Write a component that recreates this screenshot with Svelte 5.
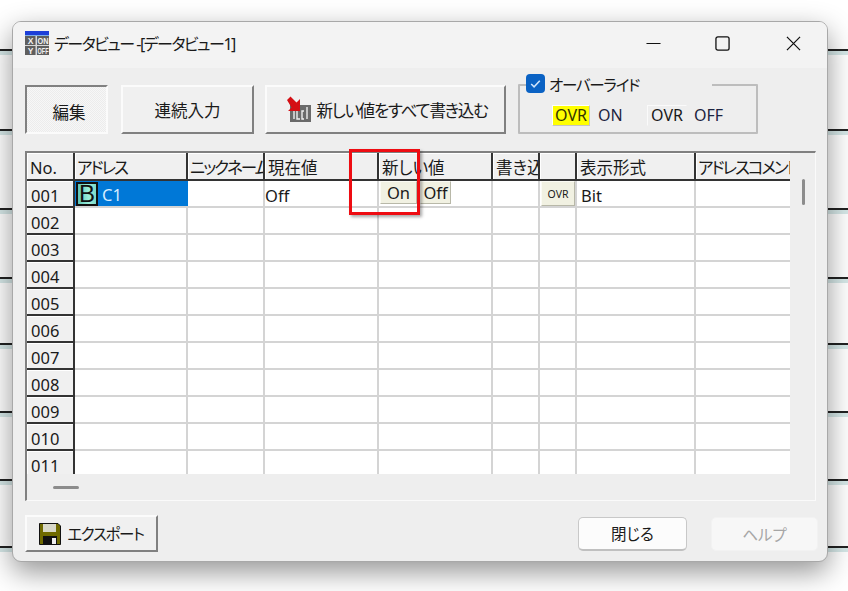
<script>
	const lineRows = [49, 129, 208, 277, 343, 411, 479, 546];
	const columns = ["No.", "アドレス", "ニックネーム", "現在値", "新しい値", "書き込", "", "表示形式", "アドレスコメント"];
	const kanaColumns = [1, 2, 8];
	const rows = ["001", "002", "003", "004", "005", "006", "007", "008", "009", "010", "011"];
</script>

<div class="desktop">
	{#each lineRows as y}
		<div class="bg-line" style="top: {y}px"></div>
	{/each}

	<div class="window">
		<div class="titlebar">
			<svg class="app-icon" viewBox="0 0 24 24">
				<rect width="24" height="24" fill="#5f5f5f" />
				<rect width="24" height="4" fill="#1d3fd8" />
				<rect x="0" y="4" width="24" height="1" fill="#7fb0e8" />
				<rect x="10.500" y="5" width="1.500" height="19" fill="#d8d8d8" />
				<rect x="0" y="14" width="24" height="1" fill="#d8d8d8" />
				<text x="5.500" y="13" class="tiny" text-anchor="middle">X</text>
				<text x="5.500" y="23" class="tiny" text-anchor="middle">Y</text>
				<text x="18" y="13" class="tiny" text-anchor="middle" textLength="11" lengthAdjust="spacingAndGlyphs">ON</text>
				<text x="18" y="23" class="tiny" text-anchor="middle" textLength="11" lengthAdjust="spacingAndGlyphs">OFF</text>
			</svg>
			<span class="title">データビュー -[データビュー1]</span>
			<div class="controls">
				<svg viewBox="0 0 16 16"><path d="M0.500 8h15" stroke="#111" fill="none" stroke-width="1.200" /></svg>
				<svg viewBox="0 0 16 16"><rect x="1" y="1" width="14" height="14" rx="2" stroke="#111" fill="none" stroke-width="1.400" /></svg>
				<svg viewBox="0 0 16 16"><path d="M1 1l14 14M15 1L1 15" stroke="#111" fill="none" stroke-width="1.300" /></svg>
			</div>
		</div>

		<div class="toolbar">
			<button class="raised pressed edit" type="button">編集</button>
			<button class="raised serial" type="button">連続入力</button>
			<button class="raised write" type="button">
				<svg class="write-icon" viewBox="0 0 26 28">
					<rect x="4" y="9" width="21" height="17" fill="#6a6a6a" />
					<path d="M8 15v8M11 15v8h3M18 15h-2v8h2M21 11v12" stroke="#eee" stroke-width="1.400" fill="none" />
					<path d="M1 4l3.500-3.500 6 6 3.500-3.500v12H2l3.500-3.500z" fill="#d40f14" />
				</svg>
				<span class="write-label">新しい値をすべて書き込む</span>
			</button>
			<div class="group">
				<div class="legend">
					<span class="check">
						<svg viewBox="0 0 20 20"><path d="M5.500 10.500l3 3 6-6.500" stroke="#cfe4fb" stroke-width="1.600" fill="none" /></svg>
					</span>
					<span class="legend-label">オーバーライド</span>
				</div>
				<div class="ovr-row">
					<span class="ovr on">OVR</span>
					<span class="ovr-label">ON</span>
					<span class="ovr off">OVR</span>
					<span class="ovr-label">OFF</span>
				</div>
			</div>
		</div>

		<div class="frame">
			<div class="sheet">
				{#each columns as col, i}
					<div class="head" class:kana={kanaColumns.includes(i)}>{col}</div>
				{/each}

				{#each rows as row, r}
					<div class="row-head">{row}</div>
					{#if r === 0}
						<div class="cell selected">
							<span class="type-b">B</span>
							<span>C1</span>
						</div>
						<div class="cell"></div>
						<div class="cell">Off</div>
						<div class="cell value-cell">
							<span class="mini on-btn">On</span>
							<span class="mini off-btn">Off</span>
						</div>
						<div class="cell"></div>
						<div class="cell ovr-cell"><span class="mini ovr-btn">OVR</span></div>
						<div class="cell format-cell">Bit</div>
						<div class="cell last"></div>
					{:else}
						{#each columns.slice(1) as _, c}
							<div class="cell" class:last={c === columns.length - 2}></div>
						{/each}
					{/if}
				{/each}
			</div>
			<div class="vscroll"><span class="vthumb"></span></div>
			<div class="hscroll"><span class="hthumb"></span></div>
			<div class="corner"></div>
		</div>

		<div class="footer">
			<button class="raised export" type="button">
				<svg class="disk" viewBox="0 0 22 22">
					<path d="M0.500 0.500h18.500l2.500 2.500v18.500H0.500z" fill="#6f6a00" stroke="#111" />
					<rect x="4" y="1" width="13" height="8" fill="#d8d8c8" />
					<rect x="4" y="13" width="14" height="8" fill="#111" />
					<rect x="13" y="15" width="4" height="6" fill="#eee" />
				</svg>
				<span class="export-label">エクスポート</span>
			</button>
			<div class="spacer"></div>
			<button class="win-btn close" type="button">閉じる</button>
			<button class="win-btn help" type="button" disabled>ヘルプ</button>
		</div>
	</div>

	<div class="callout"></div>
</div>

<style>
	:global(body) {
		margin: 0;
		background: #fff;
	}

	.desktop {
		position: relative;
		width: 848px;
		height: 591px;
		overflow: hidden;
		background: #fff;
		font-family: "Noto Sans", "Noto Sans CJK JP", sans-serif;
		font-feature-settings: "palt";
		color: #1a1a1a;
	}

	.bg-line {
		position: absolute;
		left: 0;
		right: 0;
		height: 2px;
		background: #222;
		border-bottom: 4px solid #d6e8e8;
	}

	.window {
		position: absolute;
		left: 12px;
		top: 21px;
		width: 816px;
		height: 541px;
		box-sizing: border-box;
		display: flex;
		flex-direction: column;
		background: #eeeeee;
		border: 1px solid #a8a8a8;
		border-radius: 9px;
		box-shadow: 0 10px 28px rgba(0, 0, 0, 0.42);
		overflow: hidden;
	}

	.titlebar {
		box-sizing: border-box;
		height: 46px;
		flex-shrink: 0;
		display: flex;
		align-items: center;
		padding: 0 0 4px 12px;
		background: #f3f3f3;
	}

	.app-icon {
		width: 24px;
		height: 24px;
		margin-right: 5px;
	}

	.tiny {
		font-family: "Liberation Sans", sans-serif;
		font-size: 8.500px;
		font-weight: 700;
		fill: #f2f2f2;
	}

	.title {
		font-size: 16px;
		letter-spacing: -1.500px;
		white-space: nowrap;
	}

	.controls {
		margin-left: auto;
		display: flex;
		gap: 55px;
		padding-right: 26px;
	}

	.controls svg {
		width: 15px;
		height: 15px;
	}

	.controls svg:nth-child(2) {
		margin: 0 1px 0 -1px;
	}

	.toolbar {
		display: flex;
		align-items: flex-start;
		padding: 17px 0 0 12px;
		height: 49px;
		flex-shrink: 0;
	}

	.raised {
		box-sizing: border-box;
		height: 49px;
		padding: 0;
		font: inherit;
		font-feature-settings: "palt";
		font-size: 16.500px;
		color: #1a1a1a;
		background: #f0f0f0;
		border: 2px solid;
		border-color: #fbfbfb #808080 #808080 #fbfbfb;
		display: flex;
		align-items: center;
		justify-content: center;
	}

	.pressed {
		border-color: #808080 #fbfbfb #fbfbfb #808080;
		background: repeating-conic-gradient(#f7f7f7 0 25%, #ececec 0 50%) 0 0 / 2px 2px;
	}

	.edit {
		width: 83px;
		margin-right: 13px;
		padding: 4px 0 0 5px;
	}

	.serial {
		width: 133px;
		margin-right: 11px;
	}

	.write {
		width: 241px;
		margin-right: 12px;
		padding-left: 2px;
		gap: 5px;
		white-space: nowrap;
	}

	.write-label {
		letter-spacing: -1.250px;
	}

	.write-icon {
		width: 26px;
		height: 28px;
	}

	.group {
		position: relative;
		box-sizing: border-box;
		width: 240px;
		height: 50px;
		margin-top: -1px;
		border: 2px solid #bdbdbd;
		border-radius: 1px;
	}

	.legend {
		position: absolute;
		left: 6px;
		top: -13px;
		width: 186px;
		height: 22px;
		display: flex;
		align-items: center;
		gap: 4px;
		background: #eeeeee;
		font-size: 15.500px;
	}

	.legend-label {
		letter-spacing: -1.200px;
	}

	.check {
		width: 19px;
		height: 19px;
		margin-top: -1px;
		border-radius: 4px;
		background: #0a62c4;
		display: flex;
	}

	.ovr-row {
		display: flex;
		align-items: center;
		padding: 18px 0 0 32px;
		font-size: 16px;
	}

	.ovr {
		box-sizing: border-box;
		height: 21px;
		display: flex;
		align-items: center;
		justify-content: center;
	}

	.ovr.on {
		width: 38px;
		background: #ffff00;
		border: 1px solid;
		border-color: #fff #c4c4c4 #c4c4c4 #fff;
		color: #333300;
		margin-right: 8px;
	}

	.ovr.off {
		width: 40px;
		margin-left: 24px;
		margin-right: 7px;
		border: 1px solid;
		border-color: #fafafa #eeeeee #eeeeee #fafafa;
	}

	.ovr-label {
		width: 25px;
		color: #1c2340;
	}

	.frame {
		box-sizing: border-box;
		width: 791px;
		height: 350px;
		margin: 17px 0 0 12px;
		flex-shrink: 0;
		display: grid;
		grid-template-columns: 763px 1fr;
		grid-template-rows: 321px 1fr;
		border-top: 2px solid #808080;
		border-left: 2px solid #808080;
		border-right: 1px solid #fafafa;
		border-bottom: 1px solid #fafafa;
	}

	.sheet {
		display: grid;
		grid-template-columns: 48px 113px 77px 114px 114px 47px 37px 119px 94px;
		grid-template-rows: 28px repeat(11, 27px);
		overflow: hidden;
		background: #fff;
		font-size: 16.500px;
	}

	.head {
		box-sizing: border-box;
		display: flex;
		align-items: center;
		padding: 2px 0 0 3px;
		background: #f0f0f0;
		border-right: 2px solid #333;
		border-bottom: 2px solid #333;
		box-shadow: inset 1px 1px #fff;
		white-space: nowrap;
		overflow: hidden;
	}

	.head.kana {
		letter-spacing: -2px;
		padding-left: 2px;
	}

	.head:nth-child(9) {
		border-right: none;
	}

	.row-head {
		box-sizing: border-box;
		display: flex;
		align-items: center;
		padding: 3px 0 0 4px;
		background: #f0f0f0;
		border-right: 2px solid #333;
		border-bottom: 2px solid #333;
		box-shadow: inset 1px 1px #fff;
	}

	.cell {
		box-sizing: border-box;
		display: flex;
		align-items: center;
		padding: 3px 0 0 0;
		border-right: 2px solid #d4d4d4;
		border-bottom: 2px solid #d4d4d4;
		background: #fff;
		white-space: nowrap;
	}

	.cell.last {
		border-right: none;
	}

	.format-cell {
		padding-left: 4px;
	}

	.selected {
		padding: 1px 0 0 1px;
		gap: 4px;
		background: #0078d7;
		color: #d6ecff;
		border-right: none;
	}

	.type-b {
		box-sizing: border-box;
		width: 22px;
		height: 24px;
		display: flex;
		align-items: center;
		justify-content: center;
		border: 2px solid #111;
		background: linear-gradient(90deg, #5ec4b4, #9cf0dc 60%, #7ad8c8);
		color: #111;
		font-family: "Liberation Sans", sans-serif;
		font-size: 24px;
		line-height: 1;
	}

	.value-cell {
		padding: 0 0 2px 1px;
		gap: 3px;
	}

	.mini {
		box-sizing: border-box;
		height: 23px;
		display: flex;
		align-items: center;
		justify-content: center;
		background: #f1f1e2;
		border: 1px solid;
		border-color: #fbfbf4 #b8b8a8 #b8b8a8 #fbfbf4;
	}

	.on-btn {
		width: 37px;
	}

	.off-btn {
		width: 31px;
	}

	.ovr-cell {
		padding: 0 0 0 1px;
	}

	.ovr-btn {
		width: 34px;
		height: 25px;
		font-size: 10.500px;
	}

	.vscroll {
		display: flex;
		justify-content: center;
		padding-left: 2px;
	}

	.vthumb {
		width: 3px;
		height: 26px;
		margin-top: 26px;
		background: #8c8c8c;
		border-radius: 2px;
	}

	.hscroll {
		padding: 12px 0 0 26px;
	}

	.hthumb {
		display: block;
		width: 26px;
		height: 3px;
		background: #8c8c8c;
		border-radius: 2px;
	}

	.footer {
		display: flex;
		align-items: flex-start;
		padding: 14px 9px 0 12px;
	}

	.export {
		width: 133px;
		height: 37px;
		gap: 6px;
		font-size: 15.500px;
	}

	.export-label {
		letter-spacing: -1.300px;
	}

	.disk {
		width: 22px;
		height: 22px;
	}

	.spacer {
		flex: 1;
	}

	.win-btn {
		box-sizing: border-box;
		height: 34px;
		margin-top: 2px;
		font: inherit;
		font-feature-settings: "palt";
		font-size: 15.500px;
		border-radius: 5px;
	}

	.close {
		width: 109px;
		margin-right: 24px;
		background: #fcfcfc;
		border: 1px solid #c8c8c8;
		border-bottom: 2px solid #c0c0c0;
		color: #1a1a1a;
	}

	.help {
		width: 107px;
		background: #f7f7f7;
		border: 1px solid #f2f2f2;
		color: #a6a6a6;
	}

	.callout {
		position: absolute;
		left: 349px;
		top: 149px;
		width: 71px;
		height: 66px;
		box-sizing: border-box;
		border: 3px solid #ee0c12;
		box-shadow: 2px 2px 3px rgba(0, 0, 0, 0.35);
	}
</style>
